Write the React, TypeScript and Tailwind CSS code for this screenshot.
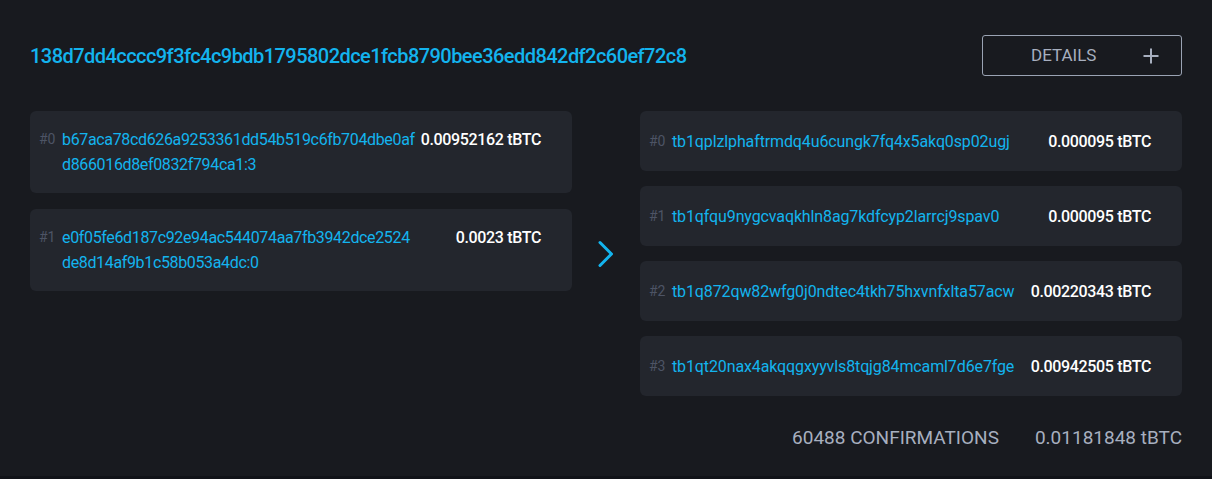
import React from "react";

const inputs = [
  { idx: "#0", lines: ["b67aca78cd626a9253361dd54b519c6fb704dbe0af", "d866016d8ef0832f794ca1:3"], amount: "0.00952162 tBTC" },
  { idx: "#1", lines: ["e0f05fe6d187c92e94ac544074aa7fb3942dce2524", "de8d14af9b1c58b053a4dc:0"], amount: "0.0023 tBTC" },
];

const outputs = [
  { idx: "#0", addr: "tb1qplzlphaftrmdq4u6cungk7fq4x5akq0sp02ugj", amount: "0.000095 tBTC" },
  { idx: "#1", addr: "tb1qfqu9nygcvaqkhln8ag7kdfcyp2larrcj9spav0", amount: "0.000095 tBTC" },
  { idx: "#2", addr: "tb1q872qw82wfg0j0ndtec4tkh75hxvnfxlta57acw", amount: "0.00220343 tBTC" },
  { idx: "#3", addr: "tb1qt20nax4akqqgxyyvls8tqjg84mcaml7d6e7fge", amount: "0.00942505 tBTC" },
];

export default function App() {
  return (
    <div className="w-[1212px] h-[479px] bg-[#111318]" style={{ fontFamily: "Roboto, 'Liberation Sans', sans-serif" }}>
      <div className="h-[476px] bg-[#181a1f] px-[30px] pt-[35px]">
        <div className="flex items-center justify-between h-[41px]">
          <div className="text-[20px] font-medium text-[#13b4ee] tracking-[-0.55px] pt-[1px]">
            138d7dd4cccc9f3fc4c9bdb1795802dce1fcb8790bee36edd842df2c60ef72c8
          </div>
          <button className="w-[200px] h-[41px] border border-[#9aa3b3] rounded-[3px] flex items-center text-[#a7afbf]">
            <span className="flex-1 text-left pl-[48px] text-[17px]">DETAILS</span>
            <svg width="16" height="16" viewBox="0 0 16 16" className="mr-[22px]">
              <path d="M8 1.5v13M1.5 8h13" stroke="#a7afbf" strokeWidth="2" strokeLinecap="square" />
            </svg>
          </button>
        </div>

        <div className="flex items-center mt-[35px]">
          <div className="w-[542px] flex flex-col gap-[16px] self-start">
            {inputs.map((r) => (
              <div key={r.idx} className="h-[82px] bg-[#23262d] rounded-[6px] pl-[9px] pr-[31px] pt-[16px] flex items-start text-[16px] leading-[25px]">
                <span className="w-[23px] text-[14px] text-[#4d5465] shrink-0">{r.idx}</span>
                <div className="flex-1 text-[#13b4ee] tracking-[-0.35px]">
                  <div>{r.lines[0]}</div>
                  <div>{r.lines[1]}</div>
                </div>
                <span className="text-white font-medium shrink-0 tracking-[-0.35px]">{r.amount}</span>
              </div>
            ))}
          </div>
          <div className="w-[68px] flex justify-center">
            <svg width="20" height="30" viewBox="0 0 20 30">
              <path d="M4 3.5 L15.5 15 L4 26.5" fill="none" stroke="#13b4ee" strokeWidth="3" strokeLinecap="round" strokeLinejoin="round" />
            </svg>
          </div>
          <div className="w-[542px] flex flex-col gap-[15px]">
            {outputs.map((r) => (
              <div key={r.idx} className="h-[60px] bg-[#23262d] rounded-[6px] pl-[9px] pr-[31px] flex items-center text-[16px] leading-[25px]">
                <span className="w-[23px] text-[14px] text-[#4d5465] shrink-0">{r.idx}</span>
                <span className="flex-1 text-[#13b4ee] tracking-[-0.12px]">{r.addr}</span>
                <span className="text-white font-medium shrink-0 tracking-[-0.35px]">{r.amount}</span>
              </div>
            ))}
          </div>
        </div>

        <div className="flex justify-end items-center gap-[36px] mt-[28px] text-[19px] text-[#a7afbf]">
          <span>60488 CONFIRMATIONS</span>
          <span>0.01181848 tBTC</span>
        </div>
      </div>
    </div>
  );
}
